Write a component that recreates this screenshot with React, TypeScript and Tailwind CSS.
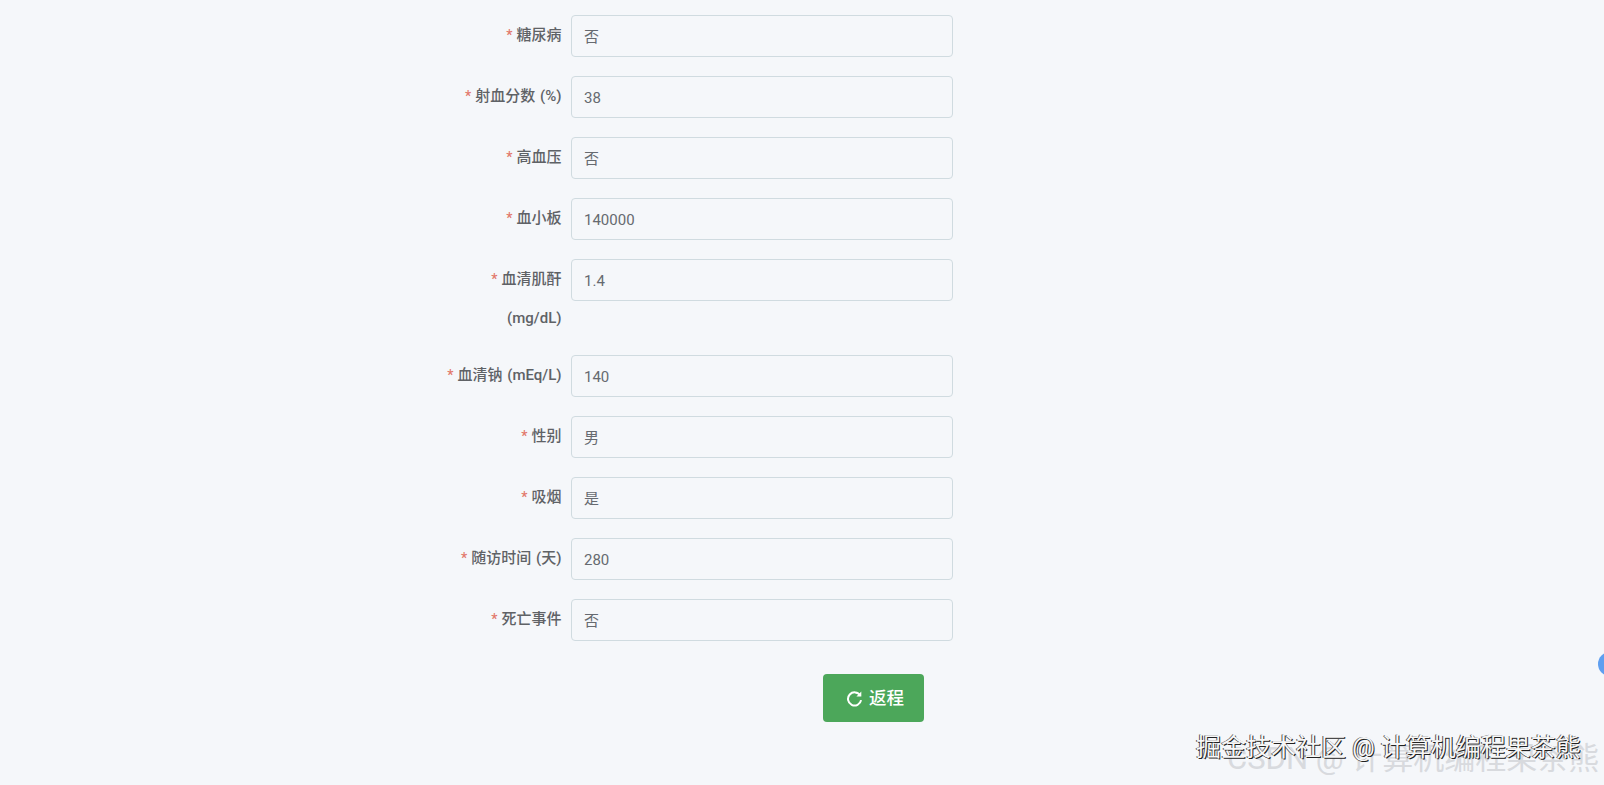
const fields = [
  { label: '糖尿病', value: '否' },
  { label: '射血分数 (%)', value: '38' },
  { label: '高血压', value: '否' },
  { label: '血小板', value: '140000' },
  { label: '血清肌酐 (mg/dL)', value: '1.4' },
  { label: '血清钠 (mEq/L)', value: '140' },
  { label: '性别', value: '男' },
  { label: '吸烟', value: '是' },
  { label: '随访时间 (天)', value: '280' },
  { label: '死亡事件', value: '否' },
]

function Row({ label, value }: { label: string; value: string }): React.ReactElement {
  return (
    <div className="mb-[19.1px] flex">
      <label className="-mb-[1.6px] w-[132px] pt-[1px] pr-[9.5px] text-right text-[15px] leading-[38.6px] font-medium [word-spacing:1px] text-[#5f6266]">
        <span className="mr-[4px] text-[14px] text-[#e2796c]">*</span>
        {label}
      </label>
      <div className="flex h-[42px] w-[382px] items-center rounded-[4px] border border-[#d0dbe0] bg-[#f5f7fa] px-[12px] pt-[2px] text-[15px] text-[#666a70]">
        {value}
      </div>
    </div>
  )
}

export default function App(): React.ReactElement {
  return (
    <div
      className="relative h-[785px] w-full overflow-hidden bg-[#f5f7fa] pt-[14.8px] pl-[439px]"
      style={{ fontFamily: 'Roboto, "Noto Sans CJK SC", sans-serif' }}
    >
      {fields.map((f) => (
        <Row key={f.label} label={f.label} value={f.value} />
      ))}

      <div className="mt-[33px] pl-[384px]">
        <button className="flex h-[48px] w-[101px] items-center justify-center gap-[6px] rounded-[4px] bg-[#4ca75a] pl-[3px] text-[17.5px] font-medium text-white">
          <svg width="17" height="17" viewBox="0 0 16 16" fill="none" stroke="currentColor" strokeWidth="1.9">
            <path d="M13.4 5.2 A6.2 6.2 0 1 0 14.2 9.5" />
            <path d="M14.4 1.4 V6 H9.8" fill="currentColor" stroke="none" />
          </svg>
          返程
        </button>
      </div>

      <div className="absolute top-[652px] right-[-18px] h-[24px] w-[24px] rounded-full bg-[#5f9ff0]" />

      <div className="absolute top-[738px] left-[1227px] text-[31px] leading-[42px] whitespace-nowrap text-[#d8dade]">
        CSDN @ 计算机编程果茶熊
      </div>
      <div className="absolute top-[732px] left-[1196px] text-[25px] leading-[32px] whitespace-nowrap text-[#f7f7f7] [text-shadow:1px_1px_0_#222,-1px_0_0_#555]">
        掘金技术社区 @ 计算机编程果茶熊
      </div>
    </div>
  )
}
